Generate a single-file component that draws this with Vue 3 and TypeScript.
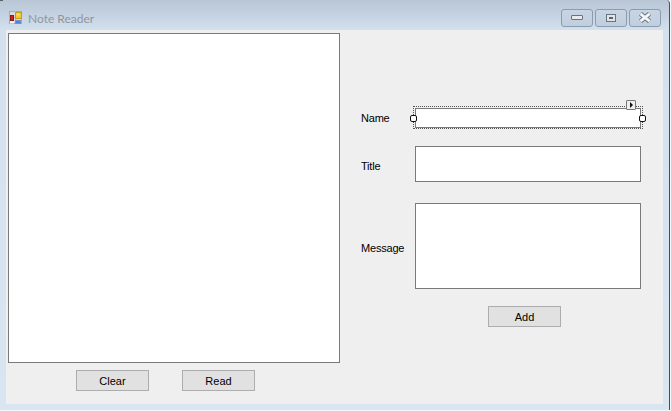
<script setup lang="ts">
const title = 'Note Reader'
</script>

<template>
  <div class="window">
    <header class="titlebar">
      <svg class="app-icon" width="13" height="13" viewBox="0 0 13 13">
        <rect x="0.5" y="0.5" width="12" height="12" fill="#dcdcdc" stroke="#ababab" />
        <path d="M0 6.5H6M6.5 0V13" stroke="#c0c0c0" />
        <rect x="1.5" y="4.5" width="3" height="5" fill="#d0201f" stroke="#8c1c1c" />
        <rect x="1" y="10" width="4" height="2.5" fill="#eceff3" />
        <rect x="6.5" y="1.5" width="6" height="6" fill="#f6c62c" stroke="#c99a14" />
        <rect x="7.5" y="2.5" width="3" height="2" fill="#fbe07a" />
        <rect x="6.5" y="9.5" width="5" height="3" fill="#4a86e0" stroke="#6f93c9" />
      </svg>
      <span class="title">{{ title }}</span>
      <div class="caption">
        <button class="cap" aria-label="Minimize"><i class="min"></i></button>
        <button class="cap" aria-label="Maximize"><i class="max"></i></button>
        <button class="cap" aria-label="Close">
          <svg width="14" height="11" viewBox="0 0 14 11">
            <path d="M2.5 1.8 L11.5 9.2 M11.5 1.8 L2.5 9.2" stroke="#626b78" stroke-width="4.6" />
            <path d="M2.5 1.8 L11.5 9.2 M11.5 1.8 L2.5 9.2" stroke="#f4f5f7" stroke-width="2.8" />
          </svg>
        </button>
      </div>
    </header>

    <main class="client">
      <section class="left">
        <div class="listbox"></div>
        <div class="actions">
          <button class="btn">Clear</button>
          <button class="btn">Read</button>
        </div>
      </section>

      <section class="right">
        <div class="row name-row">
          <label>Name</label>
          <div class="selected">
            <div class="field name"></div>
            <i class="handle left-handle"></i>
            <i class="handle right-handle"></i>
            <i class="smart-tag"></i>
          </div>
        </div>
        <div class="row title-row">
          <label>Title</label>
          <div class="field title-field"></div>
        </div>
        <div class="row message-row">
          <label>Message</label>
          <div class="field message"></div>
        </div>
        <div class="add-row">
          <button class="btn">Add</button>
        </div>
      </section>
    </main>
  </div>
</template>

<style>
html, body {
  background: #f4f6f8;
  overflow: hidden;
}
</style>

<style scoped>
.window {
  position: relative;
  box-sizing: border-box;
  width: 670px;
  height: 410px;
  padding: 0 6px 6px 6px;
  background: linear-gradient(#b9c6d5 0, #c3d1e0 14px, #d3e1ef 30px, #d9e5f1 100%);
  border-right: 1px solid #47505a;
  border-top-right-radius: 4px;
  font-family: "Liberation Sans", Arial, sans-serif;
  font-size: 11px;
  color: #000;
}
.window::before {
  content: "";
  position: absolute;
  left: 0;
  top: 0;
  width: 3px;
  height: 1px;
  background: #5a6068;
}
.titlebar {
  height: 30px;
  display: flex;
  align-items: center;
  padding: 0 0 0 3px;
  box-sizing: border-box;
}
.app-icon {
  margin-top: 5px;
}
.title {
  margin: 7px 0 0 6px;
  color: #90969e;
  font-family: Lato, "Open Sans", sans-serif;
  font-size: 12px;
}
.caption {
  margin: 5px 0 0 auto;
  display: flex;
  gap: 2px;
  padding-right: 2px;
}
.cap {
  width: 32px;
  height: 18px;
  padding: 0;
  display: flex;
  align-items: center;
  justify-content: center;
  border: 1px solid #8b9bb0;
  border-radius: 3px;
  background: linear-gradient(#c8d5e3, #c0cede);
}
.min {
  display: block;
  width: 10px;
  height: 3px;
  border: 1px solid #6a7280;
  border-radius: 1px;
  background: #e8e9eb;
}
.max {
  display: block;
  width: 4px;
  height: 2px;
  border: 2px solid #e2e4e8;
  outline: 1px solid #6a7280;
  background: #5a6378;
}
.client {
  display: flex;
  height: 374px;
  background: #efefef;
}
.left {
  width: 334px;
  padding: 3px 0 0 2px;
  box-sizing: border-box;
}
.listbox {
  box-sizing: border-box;
  width: 332px;
  height: 330px;
  background: #fff;
  border: 1px solid #7a7a7a;
}
.actions {
  display: flex;
  gap: 33px;
  margin: 7px 0 0 68px;
}
.btn {
  box-sizing: border-box;
  width: 73px;
  height: 21px;
  padding: 0;
  background: #e1e1e1;
  border: 1px solid #adadad;
  font: inherit;
  color: #000;
}
.right {
  flex: 1;
  padding: 78px 0 0 21px;
}
.row {
  display: flex;
  align-items: center;
}
.row label {
  width: 54px;
  letter-spacing: -0.2px;
}
.field {
  box-sizing: border-box;
  width: 226px;
  background: #fff;
  border: 1px solid #7a7a7a;
}
.name {
  height: 20px;
}
.title-row {
  margin-top: 18px;
}
.title-row label,
.message-row label {
  padding-top: 4px;
}
.title-field {
  height: 36px;
}
.message-row {
  margin-top: 21px;
}
.message {
  height: 86px;
}
.add-row {
  margin: 17px 0 0 127px;
}
.selected {
  position: relative;
  width: 226px;
  height: 20px;
}
.selected::before {
  content: "";
  position: absolute;
  inset: -2px -2px -1px;
  border: 1px dotted #555;
}
.handle {
  position: absolute;
  top: 7px;
  box-sizing: border-box;
  width: 7px;
  height: 7px;
  background: #fff;
  border: 1px solid #111;
  border-radius: 2px;
}
.left-handle {
  left: -5px;
}
.right-handle {
  right: -5px;
}
.smart-tag {
  position: absolute;
  top: -8px;
  right: 5px;
  box-sizing: border-box;
  width: 10px;
  height: 10px;
  background: #efefef;
  border: 1px solid #777;
  border-radius: 1px;
}
.smart-tag::after {
  content: "";
  position: absolute;
  left: 3px;
  top: 1px;
  border-left: 3px solid #111;
  border-top: 3px solid transparent;
  border-bottom: 3px solid transparent;
}
</style>
